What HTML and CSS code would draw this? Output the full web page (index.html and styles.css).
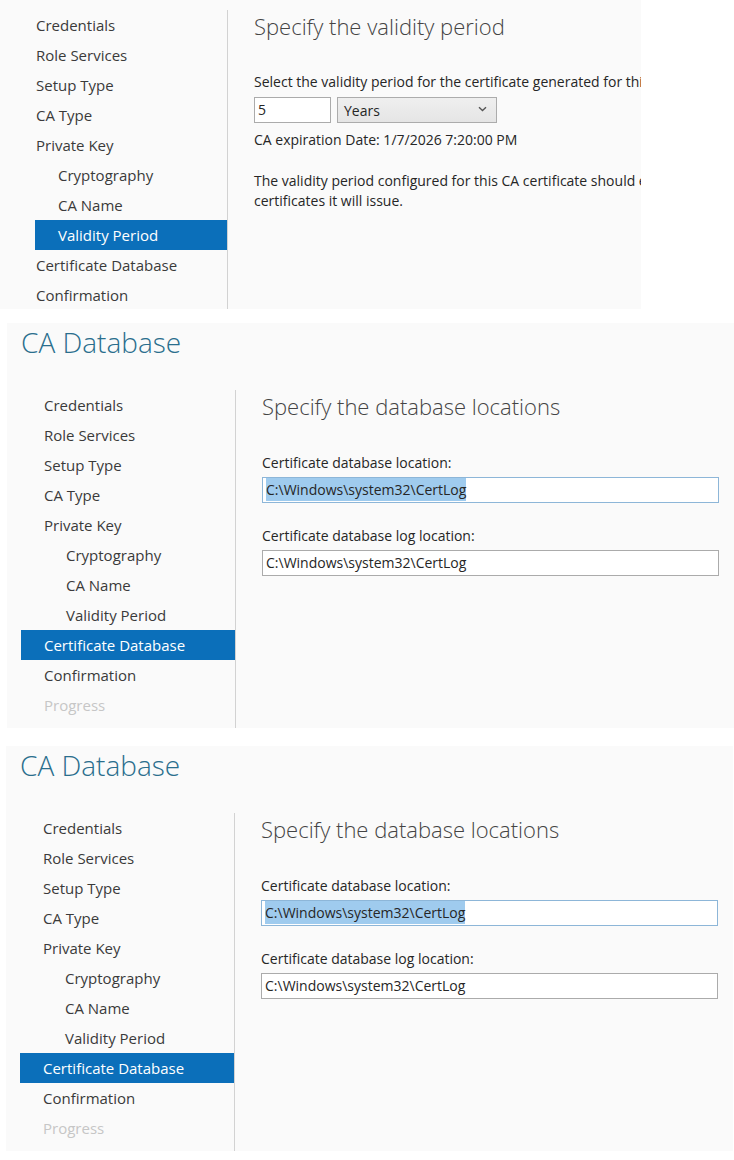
FILE: index.html
```html
<!DOCTYPE html>
<html lang="en">
<head>
<meta charset="utf-8">
<title>CA Database</title>
<link rel="stylesheet" href="styles.css">
</head>
<body>
<div class="shot shot-validity">
  <div class="wizard">
    <nav class="steps">
      <div class="step">Credentials</div>
      <div class="step">Role Services</div>
      <div class="step">Setup Type</div>
      <div class="step">CA Type</div>
      <div class="step">Private Key</div>
      <div class="step sub">Cryptography</div>
      <div class="step sub">CA Name</div>
      <div class="step sub active">Validity Period</div>
      <div class="step">Certificate Database</div>
      <div class="step">Confirmation</div>
    </nav>
    <section class="content">
      <h2 class="heading">Specify the validity period</h2>
      <p class="line lead">Select the validity period for the certificate generated for this certification authority (CA):</p>
      <div class="period-row">
        <div class="textbox short">5</div>
        <div class="dropdown"><span>Years</span>
          <svg class="chev" width="9" height="6" viewBox="0 0 9 6"><path d="M1 1.2 L4.5 4.5 L8 1.2" fill="none" stroke="#555" stroke-width="1.4"/></svg>
        </div>
      </div>
      <p class="line expiry">CA expiration Date: 1/7/2026 7:20:00 PM</p>
      <p class="line note">The validity period configured for this CA certificate should exceed the validity period for the</p>
      <p class="line">certificates it will issue.</p>
    </section>
  </div>
</div>

<div class="shot shot-db first">
  <h1 class="title">CA Database</h1>
  <div class="wizard">
    <nav class="steps">
      <div class="step">Credentials</div>
      <div class="step">Role Services</div>
      <div class="step">Setup Type</div>
      <div class="step">CA Type</div>
      <div class="step">Private Key</div>
      <div class="step sub">Cryptography</div>
      <div class="step sub">CA Name</div>
      <div class="step sub">Validity Period</div>
      <div class="step active">Certificate Database</div>
      <div class="step">Confirmation</div>
      <div class="step disabled">Progress</div>
    </nav>
    <section class="content">
      <h2 class="heading">Specify the database locations</h2>
      <p class="line label">Certificate database location:</p>
      <div class="textbox wide focused"><span class="selected">C:\Windows\system32\CertLog</span></div>
      <p class="line label second">Certificate database log location:</p>
      <div class="textbox wide">C:\Windows\system32\CertLog</div>
    </section>
  </div>
</div>

<div class="shot shot-db second-copy">
  <h1 class="title">CA Database</h1>
  <div class="wizard">
    <nav class="steps">
      <div class="step">Credentials</div>
      <div class="step">Role Services</div>
      <div class="step">Setup Type</div>
      <div class="step">CA Type</div>
      <div class="step">Private Key</div>
      <div class="step sub">Cryptography</div>
      <div class="step sub">CA Name</div>
      <div class="step sub">Validity Period</div>
      <div class="step active">Certificate Database</div>
      <div class="step">Confirmation</div>
      <div class="step disabled">Progress</div>
    </nav>
    <section class="content">
      <h2 class="heading">Specify the database locations</h2>
      <p class="line label">Certificate database location:</p>
      <div class="textbox wide focused"><span class="selected">C:\Windows\system32\CertLog</span></div>
      <p class="line label second">Certificate database log location:</p>
      <div class="textbox wide">C:\Windows\system32\CertLog</div>
    </section>
  </div>
</div>
</body>
</html>
```

FILE: styles.css
```css
html, body {
  margin: 0;
  padding: 0;
  background: #ffffff;
}

body {
  font-family: "Open Sans", "Noto Sans", sans-serif;
  font-size: 14px;
  color: #262626;
}

.shot {
  background: #fafafa;
  overflow: hidden;
  display: flex;
  flex-direction: column;
}

.shot-validity {
  width: 641px;
  height: 309px;
  padding-top: 10px;
  padding-left: 35px;
  box-sizing: border-box;
}

.shot-db {
  width: 727px;
  height: 405px;
  box-sizing: border-box;
  padding-left: 14px;
  padding-right: 15px;
}

.shot-db.first {
  margin-top: 14px;
  margin-left: 7px;
}

.shot-db.second-copy {
  margin-top: 18px;
  margin-left: 6px;
}

.title {
  margin: 0;
  font-size: 28px;
  line-height: 38px;
  height: 38px;
  font-weight: 300;
  color: #2a6e8d;
  white-space: nowrap;
}

.wizard {
  flex: 1;
  display: flex;
  min-height: 0;
}

.shot-db .wizard {
  margin-top: 29px;
}

.steps {
  flex: none;
  border-right: 1px solid #d2d2d2;
}

.shot-validity .steps {
  width: 192px;
}

.shot-db .steps {
  width: 214px;
}

.step {
  height: 30px;
  line-height: 30px;
  font-size: 15px;
  color: #3a3a3a;
  white-space: nowrap;
}

.shot-validity .step {
  padding-left: 1px;
}

.shot-validity .step.sub {
  padding-left: 23px;
}

.shot-db .step {
  padding-left: 23px;
}

.shot-db .step.sub {
  padding-left: 45px;
}

.step.active {
  background: #0b6fba;
  color: #ffffff;
}

.step.disabled {
  color: #c6c6c6;
}

.content {
  flex: 1;
  min-width: 0;
  padding-left: 26px;
}

.heading {
  margin: 0;
  font-size: 22px;
  line-height: 32px;
  font-weight: 300;
  color: #444444;
  white-space: nowrap;
}

.line {
  margin: 0;
  line-height: 20px;
  white-space: nowrap;
}

.lead {
  margin-top: 30px;
}

.period-row {
  display: flex;
  gap: 6px;
  margin-top: 5px;
}

.textbox {
  box-sizing: border-box;
  height: 26px;
  line-height: 24px;
  border: 1px solid #ababab;
  background: #ffffff;
  padding-left: 3px;
  white-space: nowrap;
}

.textbox.short {
  width: 77px;
}

.dropdown {
  box-sizing: border-box;
  width: 160px;
  height: 26px;
  border: 1px solid #acacac;
  background: linear-gradient(#efefef, #e5e5e5);
  display: flex;
  align-items: center;
  justify-content: space-between;
  padding: 0 9px 0 6px;
}

.chev {
  margin-top: -2px;
}

.expiry {
  margin-top: 7px;
}

.note {
  margin-top: 21px;
}

.label {
  margin-top: 31px;
}

.label.second {
  margin-top: 23px;
}

.label + .textbox {
  margin-top: 4px;
}

.textbox.wide {
  width: 457px;
}

.textbox.focused {
  border-color: #8db6d8;
}

.selected {
  background: #9fcbee;
  padding: 2px 0;
}
```
